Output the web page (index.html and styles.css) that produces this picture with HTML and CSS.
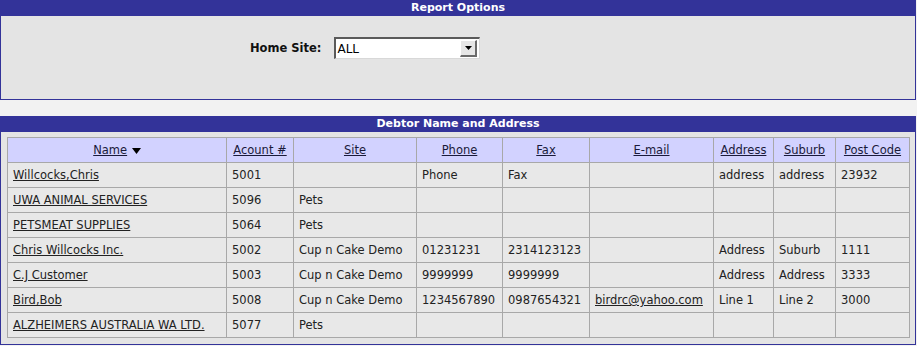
FILE: index.html
```html
<!DOCTYPE html>
<html lang="en">
<head>
    <meta charset="UTF-8">
    <title>Debtor Name and Address</title>
    <link rel="stylesheet" href="styles.css">
</head>
<body>
    <div class="panel">
        <div class="panel-title">Report Options</div>
        <div class="panel-body options-body">
            <div class="option-row">
                <label class="option-label" for="homeSite">Home Site:</label>
                <div class="combo">
                    <select class="combo-input" id="homeSite" name="homeSite">
                        <option>ALL</option>
                    </select>
                    <span class="combo-btn">
                        <svg width="7" height="4" viewBox="0 0 7 4"><path d="M0 0h7L3.5 4z" fill="#000"/></svg>
                    </span>
                </div>
            </div>
        </div>
    </div>

    <div class="panel panel-list">
        <div class="panel-title">Debtor Name and Address</div>
        <div class="panel-body list-body">
            <table class="grid">
                <colgroup>
                    <col style="width:219px">
                    <col style="width:67px">
                    <col style="width:123px">
                    <col style="width:86px">
                    <col style="width:87px">
                    <col style="width:124px">
                    <col style="width:60px">
                    <col style="width:62px">
                    <col style="width:74px">
                </colgroup>
                <thead>
                    <tr>
                        <th><a href="#">Name</a> <svg class="sort" width="9" height="6" viewBox="0 0 9 6"><path d="M0 0h9L4.5 6z" fill="#000"/></svg></th>
                        <th><a href="#">Acount #</a></th>
                        <th><a href="#">Site</a></th>
                        <th><a href="#">Phone</a></th>
                        <th><a href="#">Fax</a></th>
                        <th><a href="#">E-mail</a></th>
                        <th><a href="#">Address</a></th>
                        <th><a href="#">Suburb</a></th>
                        <th><a href="#">Post Code</a></th>
                    </tr>
                </thead>
                <tbody>
                    <tr>
                        <td><a href="#">Willcocks,Chris</a></td>
                        <td>5001</td><td></td><td>Phone</td><td>Fax</td><td></td>
                        <td>address</td><td>address</td><td>23932</td>
                    </tr>
                    <tr>
                        <td><a href="#">UWA ANIMAL SERVICES</a></td>
                        <td>5096</td><td>Pets</td><td></td><td></td><td></td>
                        <td></td><td></td><td></td>
                    </tr>
                    <tr>
                        <td><a href="#">PETSMEAT SUPPLIES</a></td>
                        <td>5064</td><td>Pets</td><td></td><td></td><td></td>
                        <td></td><td></td><td></td>
                    </tr>
                    <tr>
                        <td><a href="#">Chris Willcocks Inc.</a></td>
                        <td>5002</td><td>Cup n Cake Demo</td><td>01231231</td><td>2314123123</td><td></td>
                        <td>Address</td><td>Suburb</td><td>1111</td>
                    </tr>
                    <tr>
                        <td><a href="#">C.J Customer</a></td>
                        <td>5003</td><td>Cup n Cake Demo</td><td>9999999</td><td>9999999</td><td></td>
                        <td>Address</td><td>Address</td><td>3333</td>
                    </tr>
                    <tr>
                        <td><a href="#">Bird,Bob</a></td>
                        <td>5008</td><td>Cup n Cake Demo</td><td>1234567890</td><td>0987654321</td><td><a href="#">birdrc@yahoo.com</a></td>
                        <td>Line 1</td><td>Line 2</td><td>3000</td>
                    </tr>
                    <tr>
                        <td><a href="#">ALZHEIMERS AUSTRALIA WA LTD.</a></td>
                        <td>5077</td><td>Pets</td><td></td><td></td><td></td>
                        <td></td><td></td><td></td>
                    </tr>
                </tbody>
            </table>
        </div>
    </div>
</body>
</html>
```

FILE: styles.css
```css
body {
    font-family: "DejaVu Sans", Verdana, sans-serif;
    font-size: 11.5px;
    color: #222;
    background-color: #f2f2f2;
    margin: 0;
    padding: 0 1px 0 0;
}

a {
    color: #222;
}

.panel-title {
    background-color: #333399;
    color: #fff;
    font-weight: bold;
    font-size: 11px;
    text-align: center;
    height: 16px;
    line-height: 16px;
}

.panel-body {
    background-color: #e4e4e4;
    border: 1px solid #333399;
    border-top: none;
}

.options-body {
    height: 84px;
    box-sizing: border-box;
    padding-top: 21px;
}

.option-row {
    display: flex;
    align-items: center;
    margin-left: 249px;
}

.option-label {
    font-size: 11.5px;
    font-weight: bold;
    color: #111;
    margin-right: 13px;
}

.combo {
    display: flex;
    align-items: center;
    width: 146px;
    height: 22px;
    box-sizing: border-box;
    background-color: #fff;
    border-top: 2px solid #5a5a5a;
    border-left: 2px solid #5a5a5a;
    border-bottom: 1px solid #d8d8d8;
    border-right: 1px solid #d8d8d8;
}

.combo-input {
    flex: 1;
    min-width: 0;
    appearance: none;
    -webkit-appearance: none;
    border: none;
    background: transparent;
    font-family: "DejaVu Sans", Verdana, sans-serif;
    font-size: 12px;
    color: #000;
    padding: 0 0 0 1px;
    height: 18px;
    outline: none;
}

.combo-btn {
    display: flex;
    align-items: center;
    justify-content: center;
    width: 14px;
    height: 14px;
    margin-right: 2px;
    background-color: #e6e6e6;
    border-top: 1px solid #fff;
    border-left: 1px solid #fff;
    border-bottom: 2px solid #6a6a6a;
    border-right: 2px solid #6a6a6a;
}

.panel-list {
    margin-top: 16px;
}

.list-body {
    padding: 5px 5px 6px 6px;
}

.grid {
    width: 903px;
    table-layout: fixed;
    border-collapse: collapse;
    border: 1px solid #b0b0b0;
    background-color: #e8e8e8;
}

.grid th,
.grid td {
    border: 1px solid #a8a8a8;
    height: 24px;
    padding: 0 5px;
    white-space: nowrap;
    overflow: hidden;
}

.grid th {
    background-color: #d2d2ff;
    font-weight: normal;
    text-align: center;
}

.grid th a {
    color: #1a1a3a;
}

.grid td {
    text-align: left;
}

.sort {
    vertical-align: 0;
    margin-left: 1px;
}
```
